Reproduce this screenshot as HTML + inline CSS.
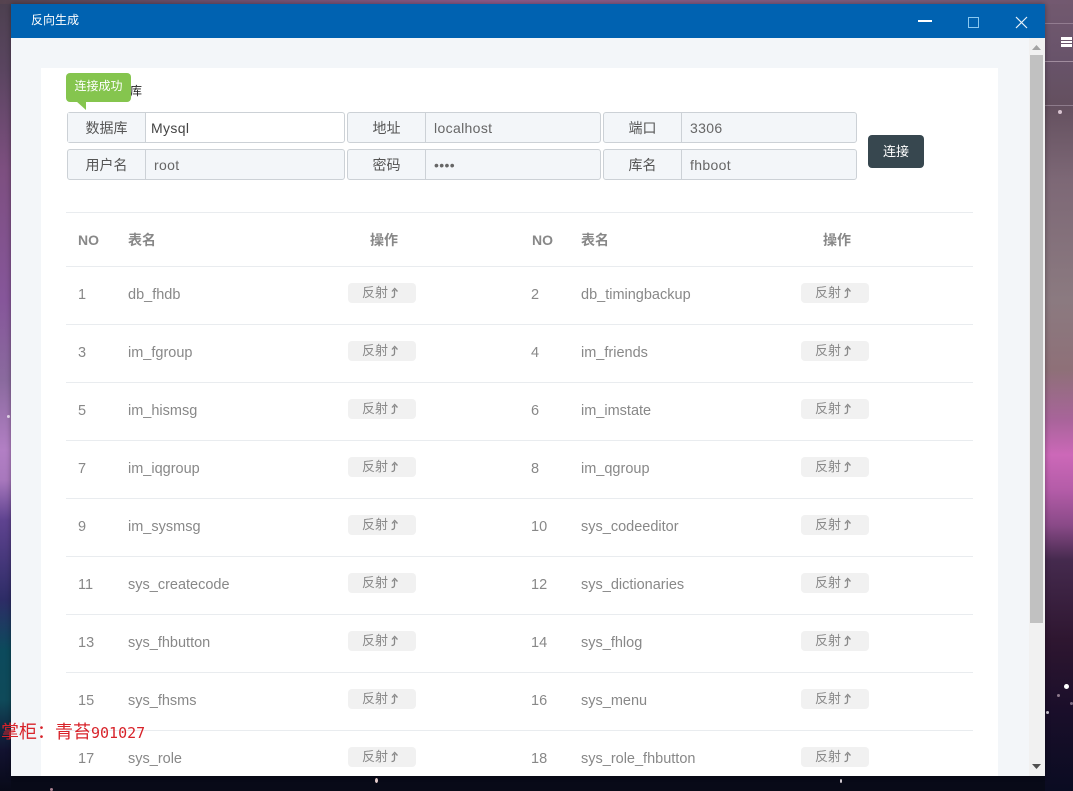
<!DOCTYPE html>
<html><head><meta charset="utf-8"><style>
html,body{margin:0;padding:0;width:1073px;height:791px;overflow:hidden;background:#080a18}
*{box-sizing:border-box}
body{position:relative;font-family:"Liberation Sans","Noto Sans CJK SC",sans-serif;font-size:14.5px;color:#888}
.a{position:absolute}
.t{position:absolute;line-height:20px;white-space:nowrap;color:#888;margin-top:1px}
.l{position:absolute;left:66px;width:907px;height:1px;background:#e9ecef}
.b{position:absolute;width:68px;height:20px;background:#f1f1f1;border-radius:4px;font-size:13px;line-height:20px;color:#888;padding-left:14px}
.b svg{position:absolute;left:42px;top:4px}
.h{position:absolute;font-size:14px;font-weight:bold;line-height:20px;top:230px;color:#888;white-space:nowrap}
.g{position:absolute;height:31px;background:#f3f6f9;border:1px solid #ccd1d6;border-radius:3px;font-size:14px;line-height:31px;color:#666;white-space:nowrap}
.g b{font-weight:normal;position:absolute;left:0;top:0;width:78px;height:29px;border-right:1px solid #ccd1d6;text-align:center;color:#555}
.g i{font-style:normal;position:absolute;left:86px;top:0;letter-spacing:.35px}
.s{position:absolute;border-radius:50%;background:#fff}
</style></head><body>
<div class="a" style="left:0;top:0;width:11px;height:791px;background:linear-gradient(#4c404f 0,#5a4560 70px,#7d4f80 170px,#86569a 300px,#8a6a9e 380px,#b27fc4 450px,#a878bd 480px,#5f4390 520px,#2d2c66 600px,#0c4a5c 650px,#0f4a5a 700px,#121230 750px,#080a18 791px)"></div>
<div class="a" style="left:1045px;top:0;width:28px;height:791px;background:linear-gradient(#72596f 0,#68536a 60px,#64505f 105px,#7d6876 180px,#8b7a80 300px,#8e7078 370px,#a8649a 420px,#cc68b8 455px,#b45ca8 490px,#8a4a88 525px,#452a4e 560px,#2e1630 640px,#1a0e2a 710px,#0a0c22 791px)"></div>
<div class="a" style="left:0;top:0;width:1073px;height:4px;background:linear-gradient(90deg,#55434f 0,#6b4f6c 200px,#8c5a8a 500px,#7e5c80 800px,#72596f 1073px)"></div>
<div class="a" style="left:1045px;top:23px;width:28px;height:1px;background:#927c90"></div>
<div class="a" style="left:1045px;top:61px;width:28px;height:1px;background:#a08c9e"></div>
<div class="a" style="left:1045px;top:105px;width:28px;height:1px;background:#8e7c8c"></div>
<div class="a" style="left:1061px;top:37px;width:11px;height:3px;background:#fff"></div>
<div class="a" style="left:1061px;top:41px;width:11px;height:2px;background:#fff"></div>
<div class="a" style="left:1061px;top:44px;width:11px;height:3px;background:#fff"></div>
<div class="s" style="left:1058px;top:110px;width:4px;height:4px;background:#d8c4d0"></div>
<div class="s" style="left:1064px;top:684px;width:5px;height:5px"></div>
<div class="s" style="left:1057px;top:694px;width:3px;height:3px;background:#8d7a8d"></div>
<div class="s" style="left:1046px;top:711px;width:3px;height:3px;background:#cfc8d4"></div>
<div class="s" style="left:1070px;top:702px;width:3px;height:3px;background:#7a6a80"></div>
<div class="s" style="left:7px;top:415px;width:3px;height:3px;background:#eadcf0"></div>
<div class="s" style="left:375px;top:778px;width:3px;height:5px;background:#e8d0d0"></div>
<div class="s" style="left:840px;top:779px;width:2px;height:4px;background:#d8d0d8"></div>
<div class="s" style="left:50px;top:788px;width:3px;height:3px;background:#a88090"></div>

<div class="a" style="left:11px;top:4px;width:1034px;height:772px;background:#f3f6f9;box-shadow:0 0 5px rgba(0,0,0,.35);overflow:hidden">
<div class="a" style="left:0;top:0;width:1034px;height:34px;background:#0062b1"></div>
<div class="t" style="left:20px;top:6px;font-size:12px;color:#fff;margin-top:0">反向生成</div>
<div class="a" style="left:907px;top:16px;width:14px;height:2px;background:#fff"></div>
<div class="a" style="left:957px;top:13px;width:11px;height:11px;border:1px solid #8ac8f0"></div>
<svg class="a" style="left:1004px;top:12px" width="13" height="13" viewBox="0 0 13 13"><path d="M1 1L12 12M12 1L1 12" stroke="#e8f2fa" stroke-width="1.2" fill="none"/></svg>
<div class="a" style="left:1018px;top:34px;width:16px;height:738px;background:#f1f1f1"></div>
<div class="a" style="left:1019px;top:51px;width:13px;height:568px;background:#c1c1c1"></div>
<svg class="a" style="left:1021px;top:41px" width="9" height="6"><path d="M4.5 0L9 5H0Z" fill="#a3a3a3"/></svg>
<svg class="a" style="left:1021px;top:760px" width="9" height="6"><path d="M0 0H9L4.5 5Z" fill="#505050"/></svg>
</div>

<div class="a" style="left:41px;top:68px;width:957px;height:708px;background:#fff"></div>
<div class="t" style="left:130px;top:80px;font-size:12px;color:#222">库</div>

<div class="g" style="left:67px;top:112px;width:278px;background:#fff"><b style="background:#f3f6f9">数据库</b><i style="left:83px;color:#444">Mysql</i></div>
<div class="g" style="left:347px;top:112px;width:254px"><b>地址</b><i>localhost</i></div>
<div class="g" style="left:603px;top:112px;width:254px"><b>端口</b><i>3306</i></div>
<div class="g" style="left:67px;top:149px;width:278px"><b>用户名</b><i>root</i></div>
<div class="g" style="left:347px;top:149px;width:254px"><b>密码</b><i>••••</i></div>
<div class="g" style="left:603px;top:149px;width:254px"><b>库名</b><i>fhboot</i></div>
<div class="a" style="left:868px;top:135px;width:56px;height:33px;background:#37474f;border-radius:4px;color:#fff;font-size:13px;line-height:33px;text-align:center">连接</div>

<div class="a" style="left:66px;top:73px;width:65px;height:29px;background:#85c54e;border-radius:4px;color:#fff;font-size:12px;line-height:27px;text-align:center">连接成功</div>
<svg class="a" style="left:76px;top:101px" width="11" height="10"><path d="M0 0H10V9Z" fill="#85c54e"/></svg>

<div class="l" style="top:212px"></div><div class="l" style="top:266px"></div><div class="l" style="top:324px"></div><div class="l" style="top:382px"></div><div class="l" style="top:440px"></div><div class="l" style="top:498px"></div><div class="l" style="top:556px"></div><div class="l" style="top:614px"></div><div class="l" style="top:672px"></div><div class="l" style="top:730px"></div>

<div class="h" style="left:78px">NO</div><div class="h" style="left:128px">表名</div><div class="h" style="left:370px">操作</div>
<div class="h" style="left:532px">NO</div><div class="h" style="left:581px">表名</div><div class="h" style="left:823px">操作</div>

<svg width="0" height="0" style="position:absolute"><symbol id="u" viewBox="0 0 9 12"><path d="M1.5 10.5C3.5 10.5 4.5 10 4.5 8V3M2 4.5L4.7 1.5L7.5 4.5" stroke="#888" stroke-width="1.3" fill="none"/></symbol></svg>

<div class="t" style="left:78px;top:284px">1</div><div class="t" style="left:128px;top:284px">db_fhdb</div><div class="b" style="left:348px;top:283px">反射<svg width="9" height="12"><use href="#u"/></svg></div>
<div class="t" style="left:531px;top:284px">2</div><div class="t" style="left:581px;top:284px">db_timingbackup</div><div class="b" style="left:801px;top:283px">反射<svg width="9" height="12"><use href="#u"/></svg></div>

<div class="t" style="left:78px;top:342px">3</div><div class="t" style="left:128px;top:342px">im_fgroup</div><div class="b" style="left:348px;top:341px">反射<svg width="9" height="12"><use href="#u"/></svg></div>
<div class="t" style="left:531px;top:342px">4</div><div class="t" style="left:581px;top:342px">im_friends</div><div class="b" style="left:801px;top:341px">反射<svg width="9" height="12"><use href="#u"/></svg></div>

<div class="t" style="left:78px;top:400px">5</div><div class="t" style="left:128px;top:400px">im_hismsg</div><div class="b" style="left:348px;top:399px">反射<svg width="9" height="12"><use href="#u"/></svg></div>
<div class="t" style="left:531px;top:400px">6</div><div class="t" style="left:581px;top:400px">im_imstate</div><div class="b" style="left:801px;top:399px">反射<svg width="9" height="12"><use href="#u"/></svg></div>

<div class="t" style="left:78px;top:458px">7</div><div class="t" style="left:128px;top:458px">im_iqgroup</div><div class="b" style="left:348px;top:457px">反射<svg width="9" height="12"><use href="#u"/></svg></div>
<div class="t" style="left:531px;top:458px">8</div><div class="t" style="left:581px;top:458px">im_qgroup</div><div class="b" style="left:801px;top:457px">反射<svg width="9" height="12"><use href="#u"/></svg></div>

<div class="t" style="left:78px;top:516px">9</div><div class="t" style="left:128px;top:516px">im_sysmsg</div><div class="b" style="left:348px;top:515px">反射<svg width="9" height="12"><use href="#u"/></svg></div>
<div class="t" style="left:531px;top:516px">10</div><div class="t" style="left:581px;top:516px">sys_codeeditor</div><div class="b" style="left:801px;top:515px">反射<svg width="9" height="12"><use href="#u"/></svg></div>

<div class="t" style="left:78px;top:574px">11</div><div class="t" style="left:128px;top:574px">sys_createcode</div><div class="b" style="left:348px;top:573px">反射<svg width="9" height="12"><use href="#u"/></svg></div>
<div class="t" style="left:531px;top:574px">12</div><div class="t" style="left:581px;top:574px">sys_dictionaries</div><div class="b" style="left:801px;top:573px">反射<svg width="9" height="12"><use href="#u"/></svg></div>

<div class="t" style="left:78px;top:632px">13</div><div class="t" style="left:128px;top:632px">sys_fhbutton</div><div class="b" style="left:348px;top:631px">反射<svg width="9" height="12"><use href="#u"/></svg></div>
<div class="t" style="left:531px;top:632px">14</div><div class="t" style="left:581px;top:632px">sys_fhlog</div><div class="b" style="left:801px;top:631px">反射<svg width="9" height="12"><use href="#u"/></svg></div>

<div class="t" style="left:78px;top:690px">15</div><div class="t" style="left:128px;top:690px">sys_fhsms</div><div class="b" style="left:348px;top:689px">反射<svg width="9" height="12"><use href="#u"/></svg></div>
<div class="t" style="left:531px;top:690px">16</div><div class="t" style="left:581px;top:690px">sys_menu</div><div class="b" style="left:801px;top:689px">反射<svg width="9" height="12"><use href="#u"/></svg></div>

<div class="t" style="left:78px;top:748px">17</div><div class="t" style="left:128px;top:748px">sys_role</div><div class="b" style="left:348px;top:747px">反射<svg width="9" height="12"><use href="#u"/></svg></div>
<div class="t" style="left:531px;top:748px">18</div><div class="t" style="left:581px;top:748px">sys_role_fhbutton</div><div class="b" style="left:801px;top:747px">反射<svg width="9" height="12"><use href="#u"/></svg></div>

<div class="t" style="left:1px;top:722px;font-family:'DejaVu Sans Mono','Noto Sans CJK SC',monospace;font-size:18px;color:#d8232a">掌柜：青苔<span style="font-size:15px">901027</span></div>
</body></html>
